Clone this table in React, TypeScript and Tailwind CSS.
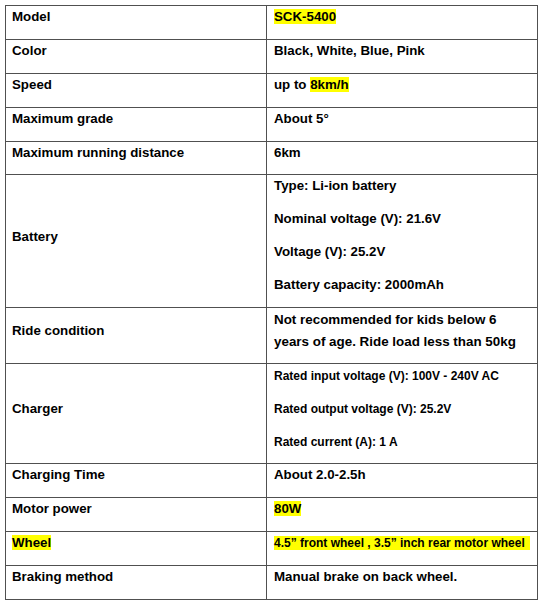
const font = "font-['Liberation_Sans',Arial,Helvetica,sans-serif]";

function Mark({ children, className = "" }: { children: React.ReactNode; className?: string }) {
  return <span className={`bg-[#ffff00] ${className}`}>{children}</span>;
}

type Row = {
  label: React.ReactNode;
  value: React.ReactNode;
  h: string;
  multi?: boolean;
};

const rows: Row[] = [
  { label: "Model", value: <Mark>SCK-5400</Mark>, h: "h-[34px]" },
  { label: "Color", value: "Black, White, Blue, Pink", h: "h-[34px]" },
  {
    label: "Speed",
    value: (
      <>
        up to <Mark>8km/h</Mark>
      </>
    ),
    h: "h-[34px]",
  },
  { label: "Maximum grade", value: "About 5°", h: "h-[34px]" },
  { label: "Maximum running distance", value: "6km", h: "h-[33px]" },
  {
    label: "Battery",
    multi: true,
    h: "h-[133px]",
    value: (
      <div className="flex flex-col gap-[17px] pt-[3px]">
        <div>Type: Li-ion battery</div>
        <div>Nominal voltage (V): 21.6V</div>
        <div>Voltage (V): 25.2V</div>
        <div>Battery capacity: 2000mAh</div>
      </div>
    ),
  },
  {
    label: "Ride condition",
    multi: true,
    h: "h-[56px]",
    value: (
      <div className="pt-[1px] text-[13.4px] leading-[22px]">
        Not recommended for kids below 6
        <br />
        years of age. Ride load less than 50kg
      </div>
    ),
  },
  {
    label: "Charger",
    multi: true,
    h: "h-[100px]",
    value: (
      <div className="flex flex-col gap-[17px] pt-[4px] text-[12px]">
        <div>Rated input voltage (V): 100V - 240V AC</div>
        <div>Rated output voltage (V): 25.2V</div>
        <div>Rated current (A): 1 A</div>
      </div>
    ),
  },
  { label: "Charging Time", value: "About 2.0-2.5h", h: "h-[34px]" },
  { label: "Motor power", value: <Mark>80W</Mark>, h: "h-[34px]" },
  {
    label: <Mark>Wheel</Mark>,
    value: <Mark className="pr-[5px] text-[12px]">4.5” front wheel , 3.5” inch rear motor wheel</Mark>,
    h: "h-[34px]",
  },
  { label: "Braking method", value: "Manual brake on back wheel.", h: "h-[33px]" },
];

export default function App() {
  return (
    <div className={`h-[603px] w-[547px] bg-white pl-[5px] pt-[5px] text-[13.3px] leading-[16px] font-bold text-black ${font}`}>
      <div className="w-[533px] border border-[#505050]">
        {rows.map((row, i) => (
          <div
            key={i}
            className={`flex ${row.h} ${i < rows.length - 1 ? "border-b border-[#505050]" : ""}`}
          >
            <div
              className={`w-[261px] shrink-0 border-r border-[#505050] pl-[6px] ${
                row.multi ? "flex items-center pb-[9px]" : "pt-[3px]"
              }`}
            >
              <div>{row.label}</div>
            </div>
            <div className={`min-w-0 flex-1 pl-[7px] ${row.multi ? "" : "pt-[3px]"}`}>{row.value}</div>
          </div>
        ))}
      </div>
    </div>
  );
}
